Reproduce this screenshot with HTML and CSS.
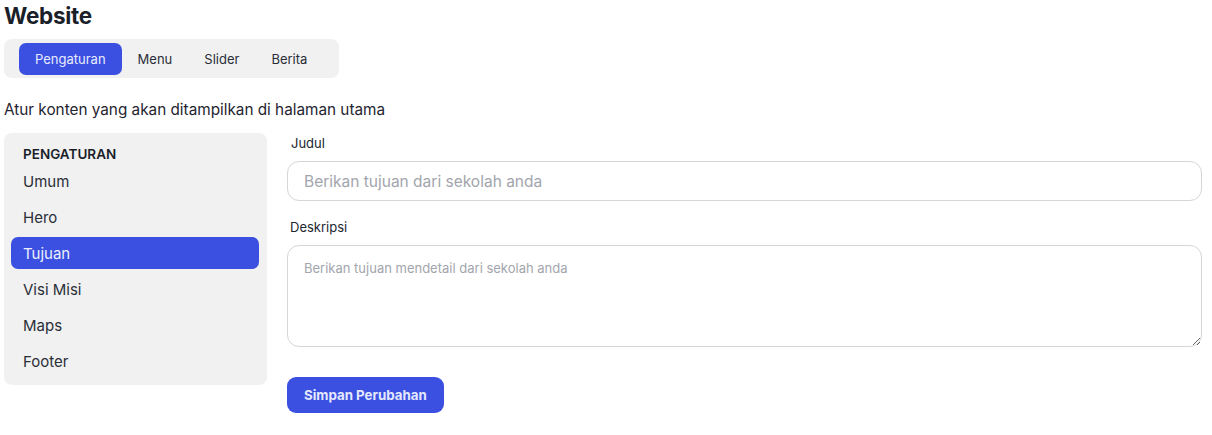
FILE: index.html
```html
<!DOCTYPE html>
<html lang="id">
<head>
<meta charset="utf-8">
<title>Website</title>
<link rel="stylesheet" href="styles.css">
</head>
<body>
<div class="page">
  <h1 class="title">Website</h1>
  <nav class="tabs">
    <a class="tab active">Pengaturan</a>
    <a class="tab">Menu</a>
    <a class="tab">Slider</a>
    <a class="tab">Berita</a>
  </nav>
  <p class="intro">Atur konten yang akan ditampilkan di halaman utama</p>
  <div class="layout">
    <aside class="sidebar">
      <div class="side-label">PENGATURAN</div>
      <a class="side-item">Umum</a>
      <a class="side-item">Hero</a>
      <a class="side-item active">Tujuan</a>
      <a class="side-item">Visi Misi</a>
      <a class="side-item">Maps</a>
      <a class="side-item">Footer</a>
    </aside>
    <form class="form">
      <label class="label">Judul</label>
      <input class="input" type="text" placeholder="Berikan tujuan dari sekolah anda">
      <label class="label second">Deskripsi</label>
      <textarea class="textarea" placeholder="Berikan tujuan mendetail dari sekolah anda"></textarea>
      <div class="actions"><button type="button" class="btn">Simpan Perubahan</button></div>
    </form>
  </div>
</div>
</body>
</html>
```
FILE: styles.css
```css
* { box-sizing: border-box; }
html, body { margin: 0; background: #fff; }
body {
  font-family: "Inter", "Noto Sans", sans-serif;
  color: #1f2430;
}
.page { padding: 0 10px 0 4px; }
.title {
  margin: 0;
  font-size: 22.5px;
  line-height: 32px;
  font-weight: 700;
  letter-spacing: -0.3px;
  color: #1b1f2a;
}
.tabs {
  margin-top: 7px;
  display: inline-flex;
  background: #f1f1f1;
  border-radius: 8px;
  padding: 4px 16px 3px 15px;
}
.tab {
  display: flex;
  align-items: center;
  height: 32px;
  padding: 0 16px;
  font-size: 13px;
  color: #2a2e38;
  border-radius: 7px;
}
.tab.active { background: #3b50e0; color: #e8ebff; }
.intro {
  margin: 22px 0 13px;
  font-size: 15.3px;
  line-height: 20px;
  color: #1f2430;
}
.layout { display: flex; gap: 20px; align-items: flex-start; }
.sidebar {
  width: 263px;
  flex: none;
  background: #f1f1f1;
  border-radius: 8px;
  padding: 11px 8px 8px 7px;
  display: flex;
  flex-direction: column;
  gap: 4px;
}
.side-label {
  font-size: 13.5px;
  font-weight: 600;
  line-height: 20px;
  padding-left: 12px;
  margin-bottom: -3px;
  color: #1b1f2a;
}
.side-item {
  display: flex;
  align-items: center;
  height: 32px;
  padding: 0 12px;
  font-size: 15px;
  color: #2a2e38;
  border-radius: 7px;
}
.side-item.active { background: #3b50e0; color: #eef0ff; }
.form { flex: 1; display: flex; flex-direction: column; }
.label {
  font-size: 13px;
  line-height: 20px;
  padding-left: 4px;
  color: #22262f;
}
.label.second { margin-top: 16px; padding-left: 3px; }
.input {
  margin-top: 8px;
  height: 40px;
  border: 1px solid #d6d6d9;
  border-radius: 12px;
  padding: 0 16px;
  font-family: inherit;
  font-size: 15.5px;
  color: #1f2430;
  outline: none;
}
.input::placeholder, .textarea::placeholder { color: #a2a5ad; }
.textarea {
  margin-top: 8px;
  height: 102px;
  border: 1px solid #d6d6d9;
  border-radius: 12px;
  padding: 13px 16px;
  font-family: inherit;
  font-size: 13px;
  line-height: 18px;
  resize: vertical;
  outline: none;
}
.actions { margin-top: 30px; }
.btn {
  height: 36px;
  padding: 0 17px;
  border: none;
  border-radius: 9px;
  background: #3b50e0;
  color: #e4e8ff;
  font-family: inherit;
  font-size: 13.3px;
  font-weight: 700;
}
```
